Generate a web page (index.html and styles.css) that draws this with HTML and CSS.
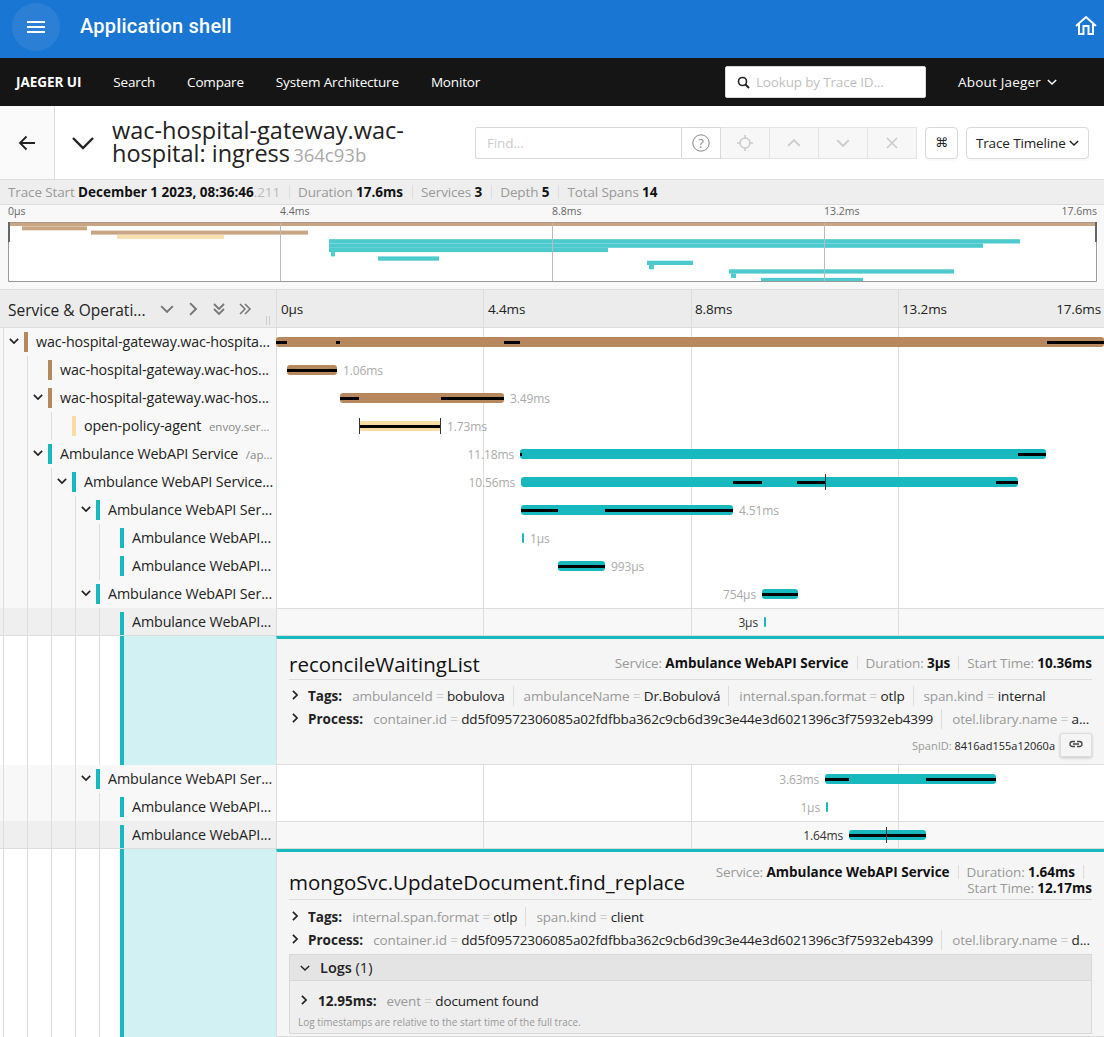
FILE: index.html
```html
<!DOCTYPE html>
<html lang="en">
<head>
  <meta charset="UTF-8">
  <title>Application shell</title>
  <link rel="stylesheet" href="styles.css">
</head>
<body>
  <svg class="sprite" aria-hidden="true">
    <symbol id="chev-down" viewBox="0 0 12 12"><path d="M1 3.5 6 8.5 11 3.5" fill="none" stroke="currentColor"/></symbol>
    <symbol id="chev-right" viewBox="0 0 12 12"><path d="M3.5 1 8.5 6 3.5 11" fill="none" stroke="currentColor"/></symbol>
    <symbol id="chev-up" viewBox="0 0 12 12"><path d="M1 8.5 6 3.5 11 8.5" fill="none" stroke="currentColor"/></symbol>
  </svg>

  <header class="app-bar">
    <button class="menu-button">
      <svg width="24" height="24" viewBox="0 0 24 24"><path fill="#fff" d="M3 18h18v-2H3v2zm0-5h18v-2H3v2zm0-7v2h18V6H3z"/></svg>
    </button>
    <span class="app-title">Application shell</span>
    <svg class="home-icon" width="22" height="22" viewBox="0 0 22 22"><path d="M1 11 11 2l10 9M4 9V19H8.500V11H13.500V19H18V9" fill="none" stroke="#fff" stroke-width="2"/></svg>
  </header>

  <nav class="nav-bar">
    <span class="nav-brand">JAEGER UI</span>
    <span class="nav-link">Search</span>
    <span class="nav-link">Compare</span>
    <span class="nav-link">System Architecture</span>
    <span class="nav-link">Monitor</span>
    <div class="nav-search">
      <svg width="13" height="13" viewBox="0 0 13 13"><circle cx="5.5" cy="5.5" r="4" fill="none" stroke="#222" stroke-width="1.6"/><path d="M8.500 8.500 12 12" stroke="#222" stroke-width="2"/></svg>
      <span>Lookup by Trace ID...</span>
    </div>
    <span class="nav-about">About Jaeger <svg class="icon-10"><use href="#chev-down"/></svg></span>
  </nav>

  <section class="trace-head">
    <div class="back-cell">
      <svg width="20" height="20" viewBox="0 0 20 20"><path d="M18 10H3M9.500 3.500 3 10l6.500 6.500" fill="none" stroke="#222" stroke-width="1.8"/></svg>
    </div>
    <svg class="head-chevron"><use href="#chev-down"/></svg>
    <h1 class="trace-title">wac-hospital-gateway.wac-hospital: ingress <small>364c93b</small></h1>
    <div class="find-box">
      <span class="find-input">Find...</span>
      <span class="find-help"><svg width="18" height="18" viewBox="0 0 18 18"><circle cx="9" cy="9" r="8.200" fill="none" stroke="#888" stroke-width="1"/><text x="9" y="13.500" text-anchor="middle" class="help-mark">?</text></svg></span>
      <span class="find-btn"><svg width="18" height="18" viewBox="0 0 18 18"><circle cx="9" cy="9" r="5" fill="none" stroke="#ccc" stroke-width="1.5"/><path d="M9 1v4M9 13v4M1 9h4M13 9h4" stroke="#ccc" stroke-width="1.5"/></svg></span>
      <span class="find-btn"><svg class="icon-14"><use href="#chev-up"/></svg></span>
      <span class="find-btn"><svg class="icon-14"><use href="#chev-down"/></svg></span>
      <span class="find-btn"><svg width="12" height="12" viewBox="0 0 12 12"><path d="M1 1 11 11M11 1 1 11" stroke="#ccc" stroke-width="1.7"/></svg></span>
    </div>
    <button class="head-btn keys-btn">⌘</button>
    <button class="head-btn view-btn">Trace Timeline <svg class="icon-10"><use href="#chev-down"/></svg></button>
  </section>

  <section class="trace-stats">
    <span class="stat">Trace Start <b>December 1 2023, 08:36:46</b><i>.211</i></span>
    <span class="stat">Duration <b>17.6ms</b></span>
    <span class="stat">Services <b>3</b></span>
    <span class="stat">Depth <b>5</b></span>
    <span class="stat">Total Spans <b>14</b></span>
  </section>

  <section class="minimap">
    <div class="minimap-ticks">
      <span>0µs</span><span>4.4ms</span><span>8.8ms</span><span>13.2ms</span><span>17.6ms</span>
    </div>
    <svg class="minimap-graph" width="1090" height="60" viewBox="0 0 1090 60">
      <g fill="#c9a583">
        <rect x="0" y="0" width="1089" height="4"/>
        <rect x="14" y="4.300" width="65" height="4"/>
        <rect x="83" y="8.600" width="217" height="4"/>
      </g>
      <rect x="109" y="12.900" width="107" height="4" fill="#fadfae"/>
      <g fill="#4ccace">
        <rect x="321" y="17.200" width="691" height="4.300"/>
        <rect x="321" y="21.500" width="654" height="4.300"/>
        <rect x="321" y="25.800" width="279" height="4.300"/>
        <rect x="323" y="30.100" width="4" height="4.300"/>
        <rect x="370" y="34.400" width="61" height="4.300"/>
        <rect x="639" y="38.700" width="46" height="4.300"/>
        <rect x="641" y="43" width="5" height="4.300"/>
        <rect x="721" y="47.300" width="225" height="4.300"/>
        <rect x="723" y="51.600" width="5" height="4.300"/>
        <rect x="753" y="55.900" width="102" height="4.100"/>
      </g>
      <g fill="#bbb">
        <rect x="272" y="0" width="1" height="60"/>
        <rect x="544" y="0" width="1" height="60"/>
        <rect x="816" y="0" width="1" height="60"/>
      </g>
      <path d="M.5 0V59.500H1088.500V0" fill="none" stroke="#999" stroke-width="1"/>
      <rect x="0" y="0" width="1089" height="1" fill="#a8978a"/>
      <rect x="0" y="0" width="2" height="20" fill="#666"/>
      <rect x="1087" y="0" width="2" height="20" fill="#666"/>
    </svg>
  </section>

  <section class="timeline">
    <div class="timeline-header">
      <div class="header-name">
        <span class="header-title">Service &amp; Operati...</span>
        <svg class="icon-14 header-icon"><use href="#chev-down"/></svg>
        <svg class="icon-14 header-icon"><use href="#chev-right"/></svg>
        <svg class="icon-14 header-icon" viewBox="0 0 14 14"><path d="M2 2 7 7 12 2M2 7 7 12 12 7" fill="none" stroke="currentColor" stroke-width="1.8"/></svg>
        <svg class="icon-14 header-icon" viewBox="0 0 14 14"><path d="M2 2 7 7 2 12M7 2 12 7 7 12" fill="none" stroke="currentColor" stroke-width="1.5"/></svg>
        <span class="header-grip"></span>
      </div>
      <div class="header-ticks">
        <span>0µs</span><span>4.4ms</span><span>8.8ms</span><span>13.2ms</span><span>17.6ms</span>
      </div>
    </div>

    <div class="span-row">
      <div class="span-name">
        <span class="guide"><svg class="toggle"><use href="#chev-down"/></svg></span>
        <span class="svc-bar brown"></span>
        <span class="span-text">wac-hospital-gateway.wac-hospita...</span>
      </div>
      <div class="span-track">
        <div class="bar brown" style="left:0;width:828px">
          <i class="mark" style="left:0;width:11px"></i>
          <i class="mark" style="left:60px;width:4px"></i>
          <i class="mark" style="left:228px;width:16px"></i>
          <i class="mark" style="left:771px;width:57px"></i>
        </div>
      </div>
    </div>

    <div class="span-row">
      <div class="span-name">
        <span class="guide"></span><span class="guide"></span>
        <span class="svc-bar brown"></span>
        <span class="span-text">wac-hospital-gateway.wac-hos...</span>
      </div>
      <div class="span-track">
        <div class="bar brown" style="left:11px;width:50px">
          <i class="mark" style="left:0;width:50px"></i>
          <span class="label after">1.06ms</span>
        </div>
      </div>
    </div>

    <div class="span-row">
      <div class="span-name">
        <span class="guide"></span><span class="guide"><svg class="toggle"><use href="#chev-down"/></svg></span>
        <span class="svc-bar brown"></span>
        <span class="span-text">wac-hospital-gateway.wac-hos...</span>
      </div>
      <div class="span-track">
        <div class="bar brown" style="left:64px;width:164px">
          <i class="mark" style="left:0;width:19px"></i>
          <i class="mark" style="left:101px;width:63px"></i>
          <span class="label after">3.49ms</span>
        </div>
      </div>
    </div>

    <div class="span-row">
      <div class="span-name">
        <span class="guide"></span><span class="guide"></span><span class="guide"></span>
        <span class="svc-bar yellow"></span>
        <span class="span-text">open-policy-agent <small>envoy.ser...</small></span>
      </div>
      <div class="span-track">
        <div class="bar yellow" style="left:83px;width:82px">
          <i class="mark" style="left:0;width:82px"></i>
          <i class="tick" style="left:0"></i>
          <i class="tick" style="left:81px"></i>
          <span class="label after">1.73ms</span>
        </div>
      </div>
    </div>

    <div class="span-row">
      <div class="span-name">
        <span class="guide"></span><span class="guide"><svg class="toggle"><use href="#chev-down"/></svg></span>
        <span class="svc-bar teal"></span>
        <span class="span-text">Ambulance WebAPI Service <small>/ap...</small></span>
      </div>
      <div class="span-track">
        <div class="bar teal" style="left:244px;width:526px">
          <i class="mark" style="left:0;width:2px"></i>
          <i class="mark" style="left:498px;width:28px"></i>
          <span class="label before">11.18ms</span>
        </div>
      </div>
    </div>

    <div class="span-row">
      <div class="span-name">
        <span class="guide"></span><span class="guide"></span><span class="guide"><svg class="toggle"><use href="#chev-down"/></svg></span>
        <span class="svc-bar teal"></span>
        <span class="span-text">Ambulance WebAPI Service...</span>
      </div>
      <div class="span-track">
        <div class="bar teal" style="left:245px;width:497px">
          <i class="mark" style="left:212px;width:29px"></i>
          <i class="mark" style="left:276px;width:28px"></i>
          <i class="tick" style="left:304px"></i>
          <i class="mark" style="left:475px;width:22px"></i>
          <span class="label before">10.56ms</span>
        </div>
      </div>
    </div>

    <div class="span-row">
      <div class="span-name">
        <span class="guide"></span><span class="guide"></span><span class="guide"></span><span class="guide"><svg class="toggle"><use href="#chev-down"/></svg></span>
        <span class="svc-bar teal"></span>
        <span class="span-text">Ambulance WebAPI Ser...</span>
      </div>
      <div class="span-track">
        <div class="bar teal" style="left:245px;width:212px">
          <i class="mark" style="left:0;width:37px"></i>
          <i class="mark" style="left:84px;width:128px"></i>
          <span class="label after">4.51ms</span>
        </div>
      </div>
    </div>

    <div class="span-row">
      <div class="span-name">
        <span class="guide"></span><span class="guide"></span><span class="guide"></span><span class="guide"></span><span class="guide"></span>
        <span class="svc-bar teal"></span>
        <span class="span-text">Ambulance WebAPI...</span>
      </div>
      <div class="span-track">
        <div class="bar teal" style="left:246px;width:2px">
          <span class="label after">1µs</span>
        </div>
      </div>
    </div>

    <div class="span-row">
      <div class="span-name">
        <span class="guide"></span><span class="guide"></span><span class="guide"></span><span class="guide"></span><span class="guide"></span>
        <span class="svc-bar teal"></span>
        <span class="span-text">Ambulance WebAPI...</span>
      </div>
      <div class="span-track">
        <div class="bar teal" style="left:282px;width:47px">
          <i class="mark" style="left:0;width:47px"></i>
          <span class="label after">993µs</span>
        </div>
      </div>
    </div>

    <div class="span-row">
      <div class="span-name">
        <span class="guide"></span><span class="guide"></span><span class="guide"></span><span class="guide"><svg class="toggle"><use href="#chev-down"/></svg></span>
        <span class="svc-bar teal"></span>
        <span class="span-text">Ambulance WebAPI Ser...</span>
      </div>
      <div class="span-track">
        <div class="bar teal" style="left:486px;width:36px">
          <i class="mark" style="left:0;width:36px"></i>
          <span class="label before">754µs</span>
        </div>
      </div>
    </div>

    <div class="span-row selected">
      <div class="span-name">
        <span class="guide"></span><span class="guide"></span><span class="guide"></span><span class="guide"></span><span class="guide"></span>
        <span class="svc-bar teal open"></span>
        <span class="span-text">Ambulance WebAPI...</span>
      </div>
      <div class="span-track">
        <div class="bar teal" style="left:488px;width:2px">
          <span class="label before dark">3µs</span>
        </div>
      </div>
    </div>

    <div class="detail-row detail-short">
      <div class="detail-side">
        <span class="guide"></span><span class="guide"></span><span class="guide"></span><span class="guide"></span><span class="guide"></span>
        <span class="svc-bar teal full"></span>
        <span class="detail-fill"></span>
      </div>
      <div class="detail-main">
        <div class="detail-head">
          <h2 class="detail-title">reconcileWaitingList</h2>
          <div class="detail-meta">
            <span class="meta-item">Service: <b>Ambulance WebAPI Service</b></span><span class="meta-item">Duration: <b>3µs</b></span><span class="meta-item">Start Time: <b>10.36ms</b></span>
          </div>
        </div>
        <div class="kv-row">
          <svg class="kv-toggle"><use href="#chev-right"/></svg>
          <b class="kv-name">Tags:</b>
          <span class="kv"><em>ambulanceId</em> <u>=</u> bobulova</span>
          <span class="kv"><em>ambulanceName</em> <u>=</u> Dr.Bobulová</span>
          <span class="kv"><em>internal.span.format</em> <u>=</u> otlp</span>
          <span class="kv"><em>span.kind</em> <u>=</u> internal</span>
        </div>
        <div class="kv-row">
          <svg class="kv-toggle"><use href="#chev-right"/></svg>
          <b class="kv-name">Process:</b>
          <span class="kv"><em>container.id</em> <u>=</u> dd5f09572306085a02fdfbba362c9cb6d39c3e44e3d6021396c3f75932eb4399</span>
          <span class="kv"><em>otel.library.name</em> <u>=</u> a...</span>
        </div>
        <div class="span-id">
          <span><em>SpanID:</em> 8416ad155a12060a</span>
          <button class="link-btn">
            <svg width="14" height="14" viewBox="0 0 14 14"><path d="M6 4.500H3.500a2.500 2.500 0 0 0 0 5H6M8 4.500h2.500a2.500 2.500 0 0 1 0 5H8M4 7h6" fill="none" stroke="#444" stroke-width="1.3"/></svg>
          </button>
        </div>
      </div>
    </div>

    <div class="span-row">
      <div class="span-name">
        <span class="guide"></span><span class="guide"></span><span class="guide"></span><span class="guide"><svg class="toggle"><use href="#chev-down"/></svg></span>
        <span class="svc-bar teal"></span>
        <span class="span-text">Ambulance WebAPI Ser...</span>
      </div>
      <div class="span-track">
        <div class="bar teal" style="left:549px;width:171px">
          <i class="mark" style="left:0;width:24px"></i>
          <i class="mark" style="left:101px;width:70px"></i>
          <span class="label before">3.63ms</span>
        </div>
      </div>
    </div>

    <div class="span-row">
      <div class="span-name">
        <span class="guide"></span><span class="guide"></span><span class="guide"></span><span class="guide"></span><span class="guide"></span>
        <span class="svc-bar teal"></span>
        <span class="span-text">Ambulance WebAPI...</span>
      </div>
      <div class="span-track">
        <div class="bar teal" style="left:550px;width:2px">
          <span class="label before">1µs</span>
        </div>
      </div>
    </div>

    <div class="span-row selected">
      <div class="span-name">
        <span class="guide"></span><span class="guide"></span><span class="guide"></span><span class="guide"></span><span class="guide"></span>
        <span class="svc-bar teal open"></span>
        <span class="span-text">Ambulance WebAPI...</span>
      </div>
      <div class="span-track">
        <div class="bar teal" style="left:573px;width:77px">
          <i class="mark" style="left:0;width:77px"></i>
          <i class="tick" style="left:37px"></i>
          <span class="label before dark">1.64ms</span>
        </div>
      </div>
    </div>

    <div class="detail-row detail-long">
      <div class="detail-side">
        <span class="guide"></span><span class="guide"></span><span class="guide"></span><span class="guide"></span><span class="guide"></span>
        <span class="svc-bar teal full"></span>
        <span class="detail-fill"></span>
      </div>
      <div class="detail-main">
        <div class="detail-head">
          <h2 class="detail-title">mongoSvc.UpdateDocument.find_replace</h2>
          <div class="detail-meta">
            <span class="meta-item">Service: <b>Ambulance WebAPI Service</b></span><span class="meta-item">Duration: <b>1.64ms</b></span><span class="meta-item">Start Time: <b>12.17ms</b></span>
          </div>
        </div>
        <div class="kv-row">
          <svg class="kv-toggle"><use href="#chev-right"/></svg>
          <b class="kv-name">Tags:</b>
          <span class="kv"><em>internal.span.format</em> <u>=</u> otlp</span>
          <span class="kv"><em>span.kind</em> <u>=</u> client</span>
        </div>
        <div class="kv-row">
          <svg class="kv-toggle"><use href="#chev-right"/></svg>
          <b class="kv-name">Process:</b>
          <span class="kv"><em>container.id</em> <u>=</u> dd5f09572306085a02fdfbba362c9cb6d39c3e44e3d6021396c3f75932eb4399</span>
          <span class="kv"><em>otel.library.name</em> <u>=</u> d...</span>
        </div>
        <div class="logs">
          <div class="logs-head">
            <svg class="icon-10"><use href="#chev-down"/></svg>
            <span class="logs-title"><b>Logs</b> (1)</span>
          </div>
          <div class="logs-body">
            <div class="log-line">
              <svg class="kv-toggle"><use href="#chev-right"/></svg>
              <b>12.95ms:</b>
              <span class="kv"><em>event</em> <u>=</u> document found</span>
            </div>
            <small class="logs-note">Log timestamps are relative to the start time of the full trace.</small>
          </div>
        </div>
      </div>
    </div>
  </section>
</body>
</html>
```

FILE: styles.css
```css
* {
  box-sizing: border-box;
}
html, body {
  margin: 0;
  height: 1037px;
  overflow: hidden;
}
body {
  font-family: "Open Sans", sans-serif;
  font-size: 13.5px;
  letter-spacing: -0.13px;
  color: #222;
  background: #fff;
}
button {
  font: inherit;
  letter-spacing: inherit;
  color: inherit;
}
svg {
  stroke-width: 1.7;
}
.sprite {
  display: none;
}
.icon-10 {
  width: 10px;
  height: 10px;
}
.icon-14 {
  width: 14px;
  height: 14px;
}

/* top bars */
.app-bar {
  height: 58px;
  background: #1976d2;
  color: #fff;
  display: flex;
  align-items: center;
  padding: 0 7px 6px 12px;
}
.menu-button {
  width: 48px;
  height: 48px;
  margin-top: 2px;
  border: 0;
  border-radius: 50%;
  background: rgba(255, 255, 255, 0.08);
  display: flex;
  align-items: center;
  justify-content: center;
}
.app-title {
  font-family: Roboto, sans-serif;
  font-weight: 500;
  font-size: 20px;
  letter-spacing: 0.2px;
  margin-left: 20px;
  flex: 1;
}
.nav-bar {
  height: 48px;
  background: #151515;
  color: #fff;
  display: flex;
  align-items: center;
  padding: 0 47px 0 16px;
  gap: 32px;
  letter-spacing: -0.17px;
}
.nav-brand {
  font-weight: 700;
  letter-spacing: -0.05px;
}
.nav-about {
  display: flex;
  align-items: center;
  gap: 6px;
  letter-spacing: 0.2px;
}
.nav-search {
  margin-left: auto;
  width: 201px;
  height: 32px;
  background: #fff;
  border: 1px solid #d9d9d9;
  border-radius: 2px;
  color: #bfbfbf;
  display: flex;
  align-items: center;
  gap: 6px;
  padding-left: 11px;
}
.trace-head {
  height: 74px;
  display: flex;
  align-items: center;
  border-bottom: 1px solid #ddd;
}
.back-cell {
  width: 55px;
  height: 100%;
  border-right: 1px solid #ddd;
  background: #fafafa;
  display: flex;
  align-items: center;
  justify-content: center;
}
.head-chevron {
  width: 24px;
  height: 24px;
  margin-left: 16px;
  color: #222;
  stroke-width: 1.2;
}
.trace-title {
  width: 320px;
  flex: none;
  margin: 0 0 0 17px;
  font-size: 23.5px;
  font-weight: 400;
  line-height: 23px;
  letter-spacing: 0;
}
.trace-title small {
  font-size: 18.5px;
  color: #aaa;
  margin-left: -3px;
}
.find-box {
  display: flex;
  height: 32px;
  margin-left: 43px;
  color: #ccc;
}
.find-input {
  width: 207px;
  border: 1px solid #d9d9d9;
  border-radius: 2px 0 0 2px;
  padding: 6px 11px;
}
.find-help {
  width: 39px;
  border: 1px solid #d9d9d9;
  border-left: 0;
  display: flex;
  align-items: center;
  justify-content: center;
}
.help-mark {
  font-size: 13px;
  fill: #888;
}
.find-btn {
  width: 49px;
  background: #f7f7f7;
  border: 1px solid #e4e4e4;
  border-left: 0;
  display: flex;
  align-items: center;
  justify-content: center;
}
.head-btn {
  height: 32px;
  background: #fff;
  border: 1px solid #d9d9d9;
  border-radius: 4px;
  box-shadow: 0 2px 0 rgba(0, 0, 0, 0.02);
}
.keys-btn {
  width: 33px;
  margin-left: 8px;
  padding: 0;
  font-family: "DejaVu Sans", sans-serif;
  font-size: 13px;
}
.view-btn {
  width: 123px;
  margin-left: 8px;
  padding: 0;
  white-space: nowrap;
}

/* stats and minimap */
.trace-stats {
  height: 25px;
  background: #eee;
  border-bottom: 1px solid #ddd;
  display: flex;
  align-items: center;
  padding-left: 8px;
  color: #999;
}
.stat {
  padding-right: 9px;
  margin-right: 8px;
  border-right: 1px solid #ddd;
  line-height: 14px;
}
.stat:last-child {
  border: 0;
}
.stat b {
  color: #111;
  font-weight: 700;
  letter-spacing: 0;
}
.stat i {
  font-style: normal;
  color: #bbb;
}
.minimap {
  height: 85px;
  background: #f8f8f8;
  border-bottom: 1px solid #ddd;
}
.minimap-ticks {
  height: 17px;
  padding: 0 7px 0 8px;
  display: flex;
  font-size: 10.5px;
  line-height: 12px;
  letter-spacing: 0;
  color: #666;
}
.minimap-ticks span {
  width: 272px;
}
.minimap-ticks span:nth-child(4) {
  width: 200px;
}
.minimap-ticks span:last-child {
  width: auto;
  margin-left: auto;
}
.minimap-graph {
  display: block;
  margin-left: 8px;
  background: #fff;
}

/* timeline */
.timeline-header {
  height: 38px;
  display: flex;
  background: #ececec;
  border-bottom: 1px solid #ddd;
}
.header-name {
  width: 276px;
  flex: none;
  display: flex;
  align-items: center;
  padding-left: 8px;
  position: relative;
}
.header-title {
  width: 152px;
  flex: none;
  padding-top: 3px;
  font-size: 15.5px;
  font-weight: 500;
  letter-spacing: 0;
  white-space: nowrap;
}
.header-icon {
  color: #777;
  margin-right: 12px;
  flex: none;
}
.header-grip {
  position: absolute;
  right: 6px;
  top: 26px;
  width: 4px;
  height: 9px;
  border-left: 1px solid #ccc;
  border-right: 1px solid #ccc;
}
.header-ticks {
  flex: 1;
  display: flex;
  align-items: center;
  padding: 0 3px 0 5px;
  background: linear-gradient(#ddd, #ddd) 0 0 / 1px 100% no-repeat,
    linear-gradient(#ddd, #ddd) 207px 0 / 1px 100% no-repeat,
    linear-gradient(#ddd, #ddd) 415px 0 / 1px 100% no-repeat,
    linear-gradient(#ddd, #ddd) 622px 0 / 1px 100% no-repeat;
}
.header-ticks span {
  width: 207px;
}
.header-ticks span:nth-child(4) {
  width: 150px;
}
.header-ticks span:last-child {
  width: auto;
  margin-left: auto;
}
.span-row {
  height: 28px;
  display: flex;
}
.span-name {
  width: 276px;
  flex: none;
  display: flex;
  background: #f8f8f8;
  padding-left: 3px;
  white-space: nowrap;
  overflow: hidden;
}
.guide {
  width: 24px;
  flex: none;
  border-left: 1px solid #ddd;
  position: relative;
}
.toggle {
  position: absolute;
  left: 5px;
  top: 8px;
  width: 10px;
  height: 10px;
  stroke-width: 2;
}
.svc-bar {
  width: 4px;
  height: 20px;
  margin: 4px 8px 0 -3px;
  flex: none;
}
.svc-bar.open {
  height: 24px;
}
.svc-bar.full {
  height: 100%;
  margin: 0 0 0 -3px;
}
.brown {
  background: #b7885e;
}
.yellow {
  background: #f8dca1;
}
.teal {
  background: #17b8be;
}
.span-text {
  font-size: 14.3px;
  line-height: 28px;
  overflow: hidden;
}
.span-text small {
  font-size: 11.5px;
  letter-spacing: 0;
  color: #888;
  margin-left: 4px;
}
.span-track {
  flex: 1;
  position: relative;
  background: linear-gradient(#ddd, #ddd) 0 0 / 1px 100% no-repeat,
    linear-gradient(#ddd, #ddd) 207px 0 / 1px 100% no-repeat,
    linear-gradient(#ddd, #ddd) 415px 0 / 1px 100% no-repeat,
    linear-gradient(#ddd, #ddd) 622px 0 / 1px 100% no-repeat;
}
.bar {
  position: absolute;
  top: 9px;
  height: 10px;
  border-radius: 3px;
}
.mark {
  position: absolute;
  top: 4px;
  height: 3px;
  background: #000;
}
.tick {
  position: absolute;
  top: -3px;
  width: 1px;
  height: 16px;
  background: #333;
}
.label {
  position: absolute;
  top: -3px;
  font-size: 12px;
  line-height: 18px;
  color: #aaa;
  white-space: nowrap;
}
.label.after {
  left: 100%;
  margin-left: 6px;
}
.label.before {
  right: 100%;
  margin-right: 6px;
}
.label.dark {
  color: #333;
}
.span-row.selected .span-name {
  background: #efefef;
  border-bottom: 1px solid #ddd;
}
.span-row.selected .span-track {
  background-color: #f8f8f8;
  border-top: 1px solid #ddd;
  border-bottom: 1px solid #ddd;
}
.span-row.selected .bar {
  top: 8px;
}

/* span details */
.detail-row {
  display: flex;
}
.detail-short {
  height: 129px;
}
.detail-long {
  height: 188px;
}
.detail-side {
  width: 276px;
  flex: none;
  display: flex;
  padding-left: 3px;
}
.detail-fill {
  flex: 1;
  background: #d1f1f2;
}
.detail-main {
  flex: 1;
  border-top: 3px solid #17b8be;
  border-left: 1px solid #ddd;
  border-bottom: 1px solid #ddd;
  background: #f5f5f5;
  padding: 0 12px 0 12px;
  min-width: 0;
}
.detail-head {
  height: 41px;
  display: flex;
  justify-content: space-between;
  align-items: center;
  border-bottom: 1px solid #ddd;
  padding-top: 10px;
}
.detail-long .detail-head {
  height: 48px;
  padding-top: 12px;
}
.detail-title {
  margin: 0;
  font-size: 20.5px;
  font-weight: 400;
  letter-spacing: 0;
  color: #111;
  white-space: nowrap;
  flex: none;
}
.detail-meta {
  text-align: right;
  color: #999;
  line-height: 16px;
  padding-left: 22px;
  margin-top: -2px;
}
.detail-long .detail-meta {
  margin-top: -4px;
}
.detail-meta b {
  color: #111;
  font-weight: 700;
  letter-spacing: 0;
}
.meta-item {
  display: inline-block;
  white-space: nowrap;
  padding-right: 8px;
  margin-right: 8px;
  border-right: 1px solid #ddd;
  line-height: 14px;
}
.meta-item:last-child {
  padding-right: 0;
  margin-right: 0;
  border: 0;
}
.kv-row {
  height: 23px;
  display: flex;
  align-items: center;
  white-space: nowrap;
  overflow: hidden;
  margin-top: 4px;
}
.detail-long .kv-row {
  margin-top: 5px;
}
.kv-row + .kv-row, .detail-long .kv-row + .kv-row {
  margin-top: 0;
}
.kv-toggle {
  width: 10px;
  height: 10px;
  margin: -2px 8px 0 1px;
  flex: none;
  stroke-width: 2;
}
.kv-name {
  font-weight: 700;
  letter-spacing: 0;
  margin-right: 10px;
}
.kv {
  padding-right: 8px;
  margin-right: 10px;
  border-right: 1px solid #ddd;
  line-height: 20px;
}
.kv:last-child {
  border: 0;
}
.kv em, .span-id em {
  font-style: normal;
  color: #999;
}
.kv u {
  text-decoration: none;
  color: #ccc;
}
.span-id {
  display: flex;
  justify-content: flex-end;
  align-items: center;
  gap: 5px;
  font-size: 11px;
  letter-spacing: 0;
  margin-top: 2px;
  height: 26px;
}
.link-btn {
  width: 32px;
  height: 24px;
  padding: 0;
  background: #f5f5f5;
  border: 1px solid #ddd;
  border-radius: 2px;
  box-shadow: 0 1px 3px rgba(0, 0, 0, 0.2);
}
.logs {
  margin-top: 3px;
  border: 1px solid #d8d8d8;
  background: #eee;
}
.logs-head {
  height: 26px;
  background: #e4e4e4;
  border-bottom: 1px solid #d8d8d8;
  display: flex;
  align-items: center;
  gap: 10px;
  padding-left: 10px;
}
.logs-title {
  font-size: 14.5px;
  letter-spacing: 0;
}
.logs-title b {
  font-weight: 600;
}
.logs-body {
  height: 52px;
  padding: 9px 8px 0;
}
.log-line {
  display: flex;
  align-items: center;
  height: 22px;
  white-space: nowrap;
}
.log-line .kv-toggle {
  margin-right: 9px;
}
.log-line b {
  margin-right: 10px;
  font-weight: 700;
  letter-spacing: 0;
}
.logs-note {
  display: block;
  font-size: 10px;
  letter-spacing: 0;
  color: #999;
  margin-top: 3px;
}
```
